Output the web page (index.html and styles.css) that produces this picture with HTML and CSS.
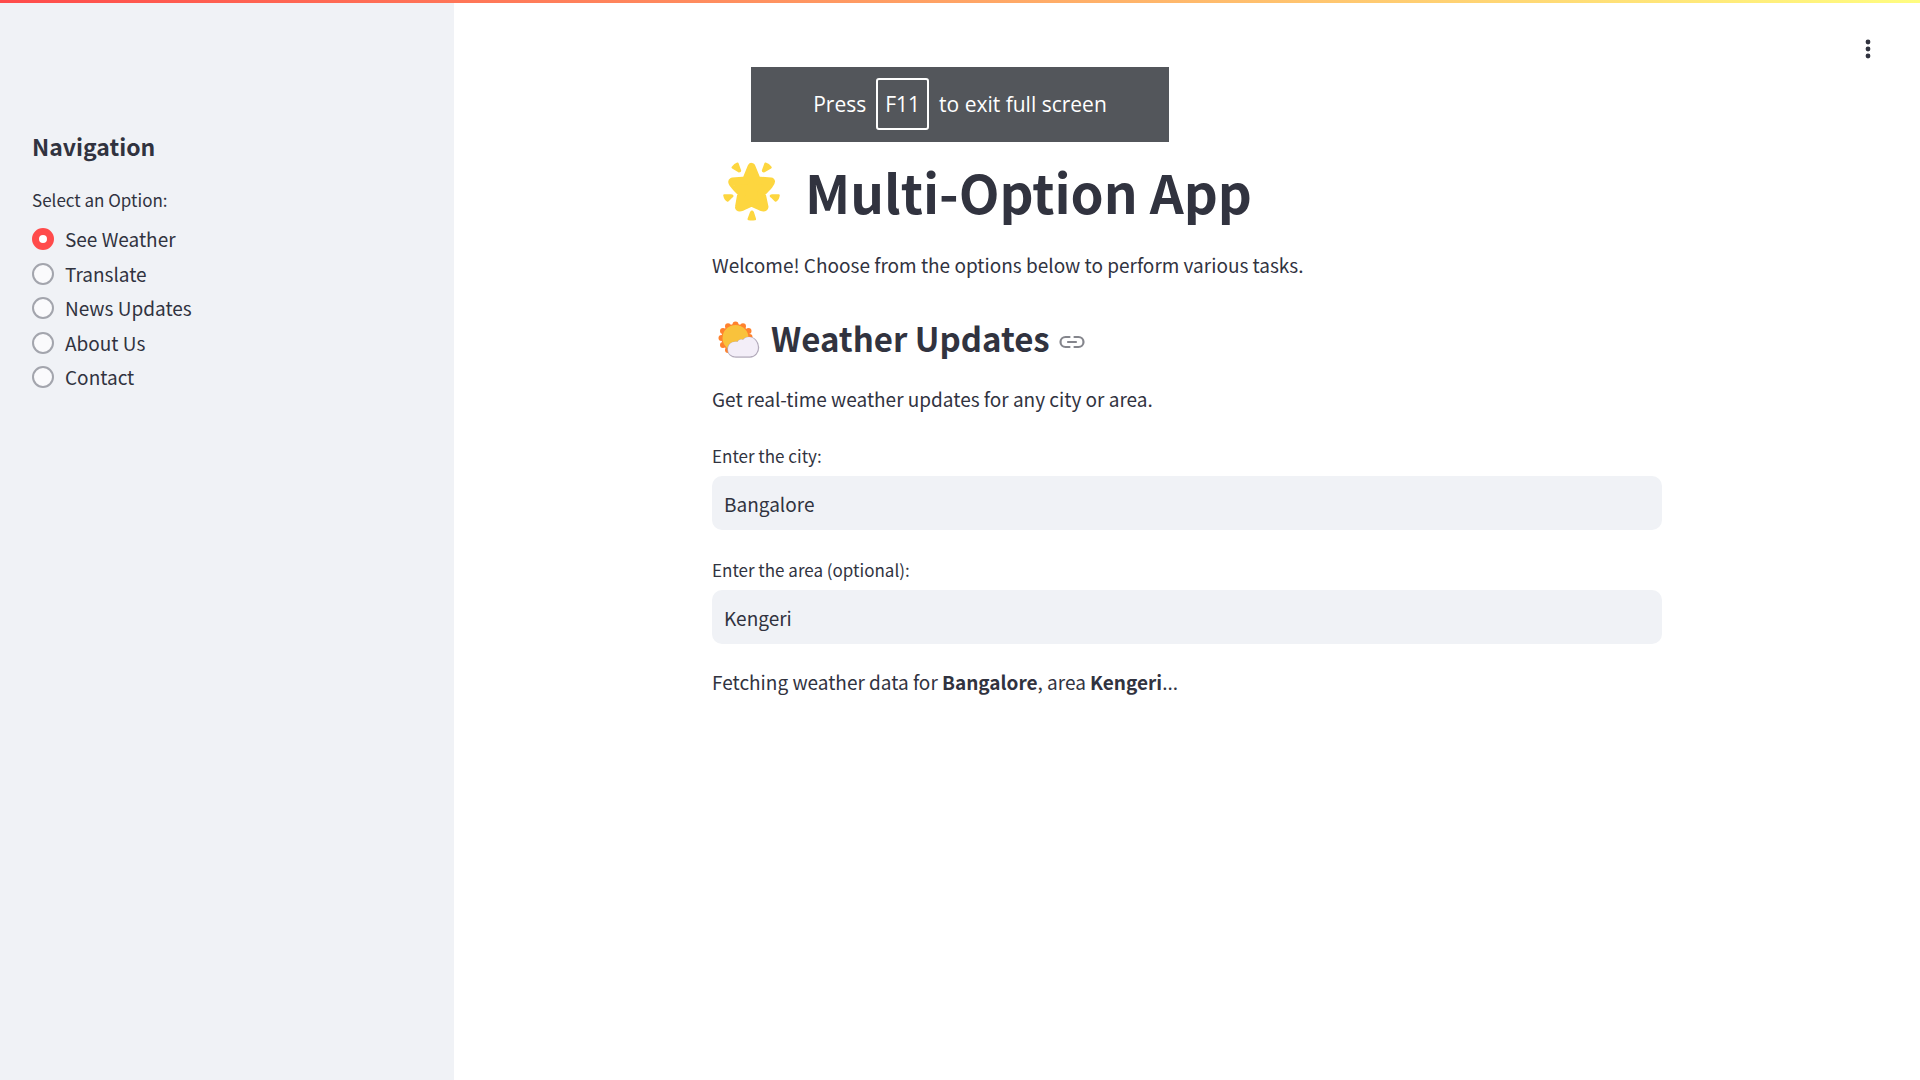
FILE: index.html
```html
<!DOCTYPE html>
<html lang="en">
<head>
<meta charset="utf-8">
<meta name="viewport" content="width=device-width, initial-scale=1">
<title>Multi-Option App</title>
<link rel="stylesheet" href="styles.css">
</head>
<body>
<div class="decoration"></div>
<div class="app">
  <aside class="sidebar">
    <h2 class="sidebar-title">Navigation</h2>
    <fieldset class="options">
      <legend class="field-label">Select an Option:</legend>
      <div class="option-list">
        <label class="option"><input class="radio" type="radio" name="page" checked>See Weather</label>
        <label class="option"><input class="radio" type="radio" name="page">Translate</label>
        <label class="option"><input class="radio" type="radio" name="page">News Updates</label>
        <label class="option"><input class="radio" type="radio" name="page">About Us</label>
        <label class="option"><input class="radio" type="radio" name="page">Contact</label>
      </div>
    </fieldset>
  </aside>
  <main class="main">
    <header class="toolbar">
      <button class="menu-button" type="button" aria-label="Main menu">
        <svg width="20" height="32" viewBox="0 0 20 32" fill="#31333f"><circle cx="10" cy="9" r="2.4"/><circle cx="10" cy="16" r="2.4"/><circle cx="10" cy="23" r="2.4"/></svg>
      </button>
    </header>
    <div class="content">
      <h1 class="title">
        <svg class="star" viewBox="0 3 80 64" aria-hidden="true" fill="#fdd63f" stroke="#fdd63f" stroke-linejoin="round">
          <path stroke-width="8" d="M39.5 11 L45 24.500 L59 25.500 Q60 26.500 49.500 37 L52.500 51 Q52.500 53 39.500 46.500 Q26.500 53 27 51 L29.500 37 Q19 26.500 20.500 25.500 L34 24.500Z"/>
          <path stroke-width="2.500" d="M20.800 11.500 Q23 8.500 25.500 7.800 L28 14.800 Q28 15.200 27 15.200Z M58.500 11.500 Q56.500 8.500 53.500 7.800 L51 14.800 Q51 15.200 52 15.200Z M12.500 39.500 H18.800 Q21.300 39.500 19.500 40.700 L15.800 44.500 Q13.300 43.500 12.500 39.500Z M66.500 39.500 H60.500 Q57.800 39.500 59.800 40.700 L63.500 44.500 Q65.800 43.500 66.500 39.500Z M36.800 63 L39.200 56.500 Q40 55 40.700 56.500 L42.800 63 Q39.800 63.500 36.800 63Z"/>
        </svg>
        <span>Multi-Option App</span>
      </h1>
      <p class="text">Welcome! Choose from the options below to perform various tasks.</p>
      <h2 class="heading">
        <svg class="weather" viewBox="0 -1 50 40" aria-hidden="true">
          <g fill="#ff822d"><circle cx="23.500" cy="19" r="14"/><circle cx="23.500" cy="5.500" r="3"/><circle cx="31" cy="7.200" r="3"/><circle cx="36.500" cy="12" r="3"/><circle cx="37.500" cy="18" r="3"/><circle cx="16" cy="7.200" r="3"/><circle cx="11" cy="12" r="3"/><circle cx="9.500" cy="19" r="3"/><circle cx="11" cy="26" r="3"/><circle cx="16" cy="31" r="3"/></g>
          <circle cx="23.500" cy="19" r="13" fill="#f9c23c"/>
          <path fill="#f3eef8" stroke="#b4acbc" stroke-width="1.500" d="M24 38 H38 C43 38 46.500 33.500 46.500 28.500 C46.500 23 42.500 18.500 37 18.500 C34.500 18.500 32.500 19.500 31 21.500 C28.500 20.500 26.500 21.500 25.500 23.500 C20 22.500 16 25.500 16 30.500 C16 35 19.500 38 24 38Z"/>
          <path fill="#f3eef8" d="M24 37.300 H38 C43 37 45.700 33 45.700 28.500 C45.700 22 41 18 37 18 C34.500 18 32.500 19 31 21 C28.500 20 26.500 21 25.500 23 C20 22 16 25 16 30.500 C16 35 19.500 37.300 24 37.300Z"/>
        </svg>
        <span>Weather Updates</span>
        <a class="anchor" href="#weather" aria-label="Link to this heading">
          <svg width="26" height="14" viewBox="0 0 26 14" fill="none" stroke="#84858c" stroke-width="2.200" stroke-linecap="round"><path d="M10.500 2H6.500a5 5 0 0 0 0 10h4M15.500 2h4a5 5 0 0 1 0 10h-4M9 7h8"/></svg>
        </a>
      </h2>
      <p class="text">Get real-time weather updates for any city or area.</p>
      <div class="field">
        <label class="field-label" for="city">Enter the city:</label>
        <input class="input" id="city" type="text" value="Bangalore">
      </div>
      <div class="field">
        <label class="field-label" for="area">Enter the area (optional):</label>
        <input class="input" id="area" type="text" value="Kengeri">
      </div>
      <p class="text">Fetching weather data for <strong>Bangalore</strong>, area <strong>Kengeri</strong>...</p>
    </div>
  </main>
</div>
<div class="fullscreen-hint" role="status">Press <kbd class="key">F11</kbd> to exit full screen</div>
</body>
</html>
```
FILE: styles.css
```css
* { box-sizing: border-box; }

body {
  margin: 0;
  background: #fff;
  color: #31333f;
  font-family: "Noto Sans CJK SC", "Noto Sans", sans-serif;
  font-size: 19px;
  line-height: 34px;
}

h1, h2, p { margin: 0; }
strong { font-weight: 600; }

.decoration {
  position: absolute;
  top: 0;
  left: 0;
  right: 0;
  height: 3px;
  background: linear-gradient(90deg, #ff4b4b, #fffd80);
}

.app { display: flex; min-height: 100vh; }

.sidebar {
  flex: 0 0 454px;
  padding: 127px 32px 32px;
  background: #f0f2f6;
}

.sidebar-title {
  font-size: 23px;
  font-weight: 600;
  line-height: 38px;
  margin-bottom: 21px;
}

.options { margin: 0; padding: 0; border: 0; }

.field-label {
  display: block;
  padding: 0;
  font-size: 17px;
  line-height: 28px;
  margin-bottom: 6px;
}

.option-list {
  display: flex;
  flex-direction: column;
  justify-content: space-between;
  height: 172px;
  margin-top: 2px;
}

.option { display: flex; align-items: center; gap: 11px; }

.radio {
  appearance: none;
  flex: none;
  width: 22px;
  height: 22px;
  margin: 0;
  border: 2px solid #a3a5ad;
  border-radius: 50%;
  background: #fafafc;
}

.radio:checked { border: 7px solid #ff4b4b; background: #fff; }

.main { flex: 1; min-width: 0; }

.toolbar {
  display: flex;
  justify-content: flex-end;
  padding: 33px 42px 0;
  height: 80px;
}

.menu-button {
  display: flex;
  width: 20px;
  height: 32px;
  padding: 0;
  border: 0;
  background: none;
}

.content {
  display: flex;
  flex-direction: column;
  gap: 21px;
  max-width: 950px;
  margin: 0 auto;
  padding: 75px 0 64px;
}

.title {
  display: flex;
  align-items: center;
  gap: 13px;
  font-size: 53px;
  font-weight: 700;
  line-height: 72px;
}

.star { width: 80px; height: 64px; overflow: visible; }

.heading {
  display: flex;
  align-items: center;
  gap: 9px;
  margin-top: 12px;
  font-size: 33px;
  font-weight: 600;
  line-height: 46px;
}

.weather { width: 50px; height: 40px; }
.anchor { display: flex; padding-top: 8px; }

.field { margin-top: 5px; }

.input {
  display: block;
  width: 100%;
  height: 54px;
  padding: 0 12px;
  border: 0;
  border-radius: 10px;
  background: #f0f2f6;
  color: inherit;
  font: inherit;
}

.fullscreen-hint {
  position: fixed;
  top: 67px;
  left: 50%;
  transform: translateX(-50%);
  display: flex;
  align-items: center;
  justify-content: center;
  gap: 10px;
  width: 418px;
  height: 75px;
  padding-bottom: 1px;
  background: #53565b;
  color: #fff;
  font-family: "Open Sans", "Noto Sans", sans-serif;
  font-size: 21px;
}

.key {
  padding: 7px;
  border: 2px solid #fff;
  border-radius: 3px;
  font: inherit;
}
```
